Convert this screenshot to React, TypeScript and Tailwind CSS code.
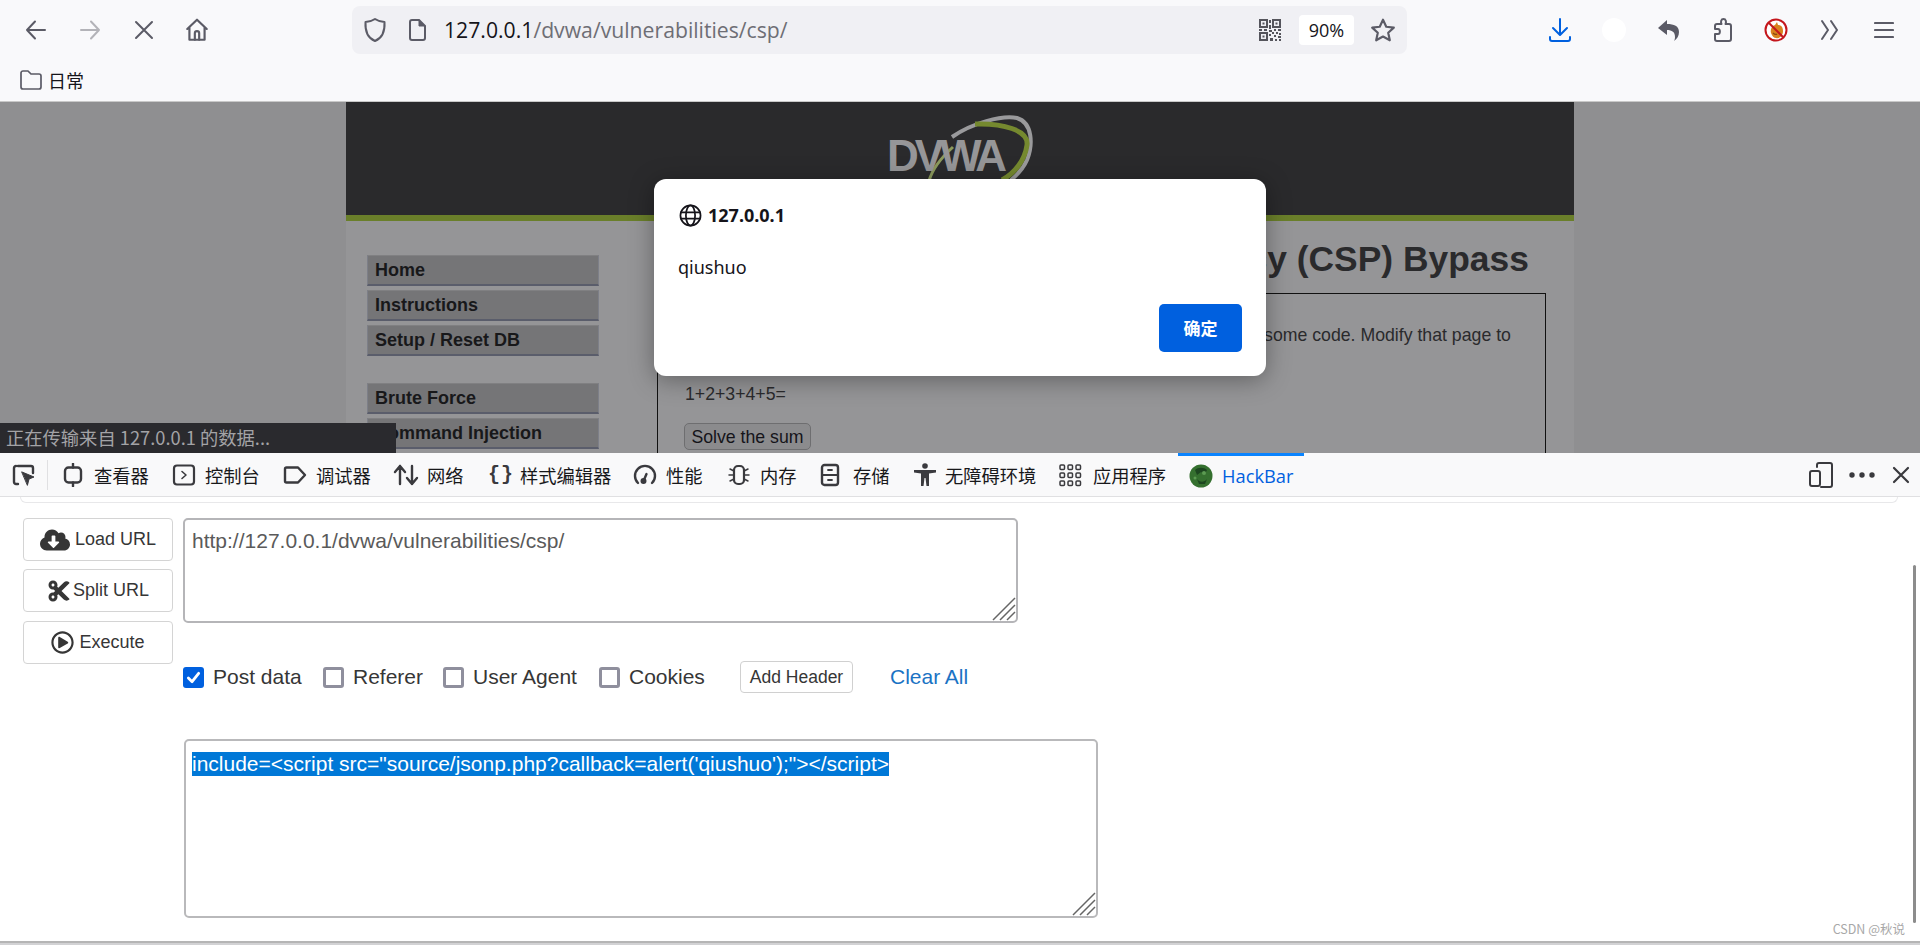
import React from "react";
import { FaCloudDownloadAlt, FaCut, FaRegPlayCircle } from "react-icons/fa";

const Stroke = ({ children, w = 24, h = 24, vb = "0 0 24 24", color = "#5b5b66", sw = 2 }: any) => (
  <svg width={w} height={h} viewBox={vb} fill="none" stroke={color} strokeWidth={sw} strokeLinecap="round" strokeLinejoin="round" className="shrink-0 block">
    {children}
  </svg>
);

const Qr = () => (
  <svg width="22" height="22" viewBox="0 0 22 22" className="shrink-0 block" fill="#55555c">
    <path fillRule="evenodd" d="M0 0h9v9H0zM2 2v5h5V2zM13 0h9v9h-9zM15 2v5h5V2zM0 13h9v9H0zM2 15v5h5v-5z" />
    <rect x="3.5" y="3.5" width="2" height="2" />
    <rect x="16.5" y="3.5" width="2" height="2" />
    <rect x="3.5" y="16.5" width="2" height="2" />
    <path d="M10 1h2v3h-2zM10 6h2v4h-2zM0 10h3v2H0zM5 10h3v2H5zM10 11h3v2h-3zM15 10h2v2h-2zM19 10h3v2h-3zM13 13h2v2h-2zM17 13h2v2h-2zM20 14h2v2h-2zM10 15h2v2h-2zM15 16h2v2h-2zM19 17h3v2h-3zM11 19h3v3h-3zM16 20h2v2h-2zM20 20h2v2h-2z" />
  </svg>
);

const NoScript = () => (
  <svg width="24" height="24" viewBox="0 0 24 24" className="shrink-0 block">
    <circle cx="12" cy="12" r="10.5" fill="#fff" stroke="#c4161c" strokeWidth="2" />
    <path d="M7 15c-1-4 1-7 4-8l2-3 1 3c3 0 5 2 5 6 0 5-4 8-7 7-2 0-4-2-5-5z" fill="#d9821e" />
    <path d="M9 15c1 1 3 2 4 1" stroke="#8a4b10" strokeWidth="1.4" fill="none" />
    <path d="M5 5l14 14" stroke="#c4161c" strokeWidth="2" />
  </svg>
);

const Globe = () => (
  <svg width="23" height="23" viewBox="0 0 24 24" fill="none" stroke="#15141a" strokeWidth="1.8" className="shrink-0 block">
    <circle cx="12" cy="12" r="10.5" />
    <ellipse cx="12" cy="12" rx="4.8" ry="10.5" />
    <path d="M1.5 8.7h21M1.5 15.3h21" />
  </svg>
);

const DvwaLogo = () => (
  <div className="relative w-[146px] h-[99px]">
    <svg width="146" height="99" viewBox="0 0 146 99" className="absolute left-0 top-0 block">
      <path d="M65 22C85 8 115 0 130 3c16 5 16 27 10 42-3 7-10 15-16 20" fill="none" stroke="#9a9a9c" strokeWidth="4" />
      <path d="M88 9c27-1 54 6 52 21-2 15-12 28-25 35" fill="none" stroke="#75892f" strokeWidth="5" />
      <path d="M66 32C55 42 45 55 42 66" fill="none" stroke="#8b9a5c" strokeWidth="3" />
    </svg>
    <span className="absolute left-0 top-[16px] text-[44px] leading-[50px] font-bold tracking-[-4px] text-[#969698] [font-family:'Liberation_Sans',sans-serif]">DVWA</span>
  </div>
);

const TabIcons: Record<string, React.ReactNode> = {
  insp: (
    <Stroke w={24} h={24} color="#3a3a3e" sw={2.4}>
      <path d="M6 3h13a2 2 0 0 1 2 2v5M6 21H4a2 2 0 0 1-2-2V5a2 2 0 0 1 2-2" />
      <path d="M10 9l12 5-5 2-1.500 6z" fill="#3a3a3e" strokeWidth={1} />
    </Stroke>
  ),
  console: (
    <Stroke w={24} h={24} color="#3a3a3e" sw={2.2}>
      <rect x="2" y="2.5" width="20" height="19" rx="3" />
      <path d="M10 8.5l4 3.5-4 3.5" strokeWidth={1.6} />
    </Stroke>
  ),
  debug: (
    <Stroke w={24} h={24} color="#3a3a3e" sw={2.4}>
      <path d="M2 6a1.500 1.500 0 0 1 1.500-1.500H15l7 7.500-7 7.500H3.500A1.500 1.500 0 0 1 2 18z" />
    </Stroke>
  ),
  net: (
    <Stroke w={26} h={24} vb="0 0 26 24" color="#3a3a3e">
      <path d="M7 21V3M2 9l5-6 5 6M19 3v18M14 15l5 6 5-6" strokeWidth={2.4} />
    </Stroke>
  ),
  inspect: (
    <Stroke w={22} h={24} vb="0 0 22 24" color="#3a3a3e" sw={2.400}>
      <rect x="3" y="4.500" width="16" height="15" rx="3.500" />
      <path d="M11 0.800v3.700M11 19.500v3.700" />
    </Stroke>
  ),
  style: <span className="text-[20px] font-bold text-[#3a3a3e] leading-6 tracking-[1px] [font-family:'Liberation_Mono',monospace]">{"{}"}</span>,
  perf: (
    <Stroke w={24} h={24} color="#3a3a3e" sw={2.400}>
      <path d="M5 20a10 10 0 1 1 14 0" />
      <path d="M10.500 18l3-7" />
      <circle cx="10.500" cy="18" r="1.800" fill="#3a3a3e" />
    </Stroke>
  ),
  mem: (
    <Stroke w={24} h={24} color="#3a3a3e" sw={2.200}>
      <rect x="7" y="3" width="10" height="18" rx="4" />
      <path d="M3 6l4 2M2 12h5M3 18l4-2M21 6l-4 2M22 12h-5M21 18l-4-2" strokeWidth={1.5} />
    </Stroke>
  ),
  store: (
    <Stroke w={20} h={24} vb="0 0 20 24" color="#3a3a3e" sw={2.400}>
      <rect x="2" y="2" width="16" height="20" rx="2.500" />
      <path d="M2 12h16M8 7h4M8 17h4" strokeWidth={1.800} />
    </Stroke>
  ),
  a11y: (
    <svg width="24" height="24" viewBox="0 0 24 24" fill="#3a3a3e" className="shrink-0 block">
      <circle cx="12" cy="3" r="2.800" />
      <path d="M1 7h22v2.500l-7 1V23h-2.500l-1-8h-1l-1 8H8V10.500l-7-1z" />
    </svg>
  ),
  app: (
    <svg width="24" height="24" viewBox="0 0 24 24" fill="none" stroke="#3a3a3e" strokeWidth="1.500" className="shrink-0 block">
      <rect x="2" y="2" width="4.500" height="4.500" rx="1" />
      <rect x="10" y="2" width="4.500" height="4.500" rx="1" />
      <rect x="18" y="2" width="4.500" height="4.500" rx="1" />
      <rect x="2" y="10" width="4.500" height="4.500" rx="1" />
      <rect x="10" y="10" width="4.500" height="4.500" rx="1" />
      <rect x="18" y="10" width="4.500" height="4.500" rx="1" />
      <rect x="2" y="18" width="4.500" height="4.500" rx="1" />
      <rect x="10" y="18" width="4.500" height="4.500" rx="1" />
      <rect x="18" y="18" width="4.500" height="4.500" rx="1" />
    </svg>
  ),
  hack: (
    <svg width="24" height="24" viewBox="0 0 24 24" className="shrink-0 block">
      <circle cx="12" cy="12" r="11.500" fill="#35702f" />
      <path d="M6 6c3-3 9-3 12 0l-2 4-4-2-4 3zM8 15c2 3 7 4 10 0l-2 5-6 0z" fill="#1d4620" />
      <circle cx="15" cy="9" r="2" fill="#5c9b52" />
      <circle cx="6" cy="14" r="1.500" fill="#5c9b52" />
    </svg>
  ),
};

const tabs = [
  { k: "inspect", t: "查看器", c: "w-[110px]", i: "w-[32px]" },
  { k: "console", t: "控制台", c: "w-[111px]", i: "w-[33px]" },
  { k: "debug", t: "调试器", c: "w-[110px]", i: "w-[33px]" },
  { k: "net", t: "网络", c: "w-[95px]", i: "w-[34px]" },
  { k: "style", t: "样式编辑器", c: "w-[145px]", i: "w-[32px]" },
  { k: "perf", t: "性能", c: "w-[94px]", i: "w-[33px]" },
  { k: "mem", t: "内存", c: "w-[93px]", i: "w-[33px]" },
  { k: "store", t: "存储", c: "w-[93px]", i: "w-[33px]" },
  { k: "a11y", t: "无障碍环境", c: "w-[145px]", i: "w-[32px]" },
  { k: "app", t: "应用程序", c: "w-[120px]", i: "w-[35px]" },
];

const MenuItem = ({ t }: { t: string }) => (
  <div className="h-[31px] shrink-0 bg-[#757577] border-t border-t-[#808082] border-x border-x-[#7d7f88] border-b-2 border-b-[#5a5d6b] pl-[7px] flex items-center text-[18px] font-bold text-[#18181a]">
    {t}
  </div>
);

const HBtn = ({ icon, t, c = "" }: { icon: React.ReactNode; t: string; c?: string }) => (
  <div className={"h-[43px] border border-[#d4d4d4] rounded-[4px] bg-white flex items-center justify-center gap-[5px] text-[18px] text-[#363636] " + c}>
    {icon}
    <span>{t}</span>
  </div>
);

const Check = ({ t, on, c }: { t: string; on?: boolean; c: string }) => (
  <div className={"flex items-center gap-[9px] " + c}>
    {on ? (
      <span className="w-[21px] h-[21px] rounded-[3px] bg-[#0060df] flex items-center justify-center">
        <svg width="15" height="15" viewBox="0 0 16 16" fill="none" stroke="#fff" strokeWidth="3" strokeLinecap="round" strokeLinejoin="round"><path d="M2.500 8.500l4 4 7-9" /></svg>
      </span>
    ) : (
      <span className="w-[21px] h-[21px] rounded-[3px] border-[3px] border-[#8f8f9d] bg-white" />
    )}
    <span className="text-[21px] leading-[24px] text-[#363636]">{t}</span>
  </div>
);

const Grip = () => (
  <svg width="24" height="24" viewBox="0 0 24 24" className="absolute right-0 bottom-0 block" stroke="#666" strokeWidth="1.500">
    <path d="M23 1L1 23M23 8L8 23M23 15L15 23" />
  </svg>
);

export default function App() {
  return (
    <div className="relative w-[1920px] h-[945px] overflow-hidden bg-white flex flex-col [font-family:'Liberation_Sans',sans-serif]">
      {/* Browser chrome */}
      <div className="h-[102px] shrink-0 bg-[#f9f9fb] border-b border-b-[#c8c8c8] flex flex-col">
        <div className="h-[60px] flex items-center">
          <div className="w-[352px] flex items-center pl-[24px]">
            <Stroke w={24} h={24}><path d="M21 12H3M11 3.500L3 12l8 8.500" sw={1.600} /></Stroke>
            <div className="w-[30px]" />
            <Stroke w={24} h={24} color="#b3b3b8"><path d="M3 12h18M13 3.500l8 8.500-8 8.500" /></Stroke>
            <div className="w-[32px]" />
            <Stroke w={20} h={20} vb="0 0 20 20"><path d="M2 2l16 16M18 2L2 18" /></Stroke>
            <div className="w-[30px]" />
            <Stroke w={26} h={26}>
              <path d="M3 11l9-8.500 9 8.500M5 9.500V21h14V9.500" sw={1.600} />
              <path d="M10 21v-6a2 2 0 0 1 4 0v6" />
            </Stroke>
          </div>
          <div className="w-[1055px] h-[48px] bg-[#f0f0f4] rounded-[8px] flex items-center pl-[11px] pr-[11px]">
            <Stroke w={24} h={26} vb="0 0 24 26">
              <path d="M12 2c3 2 6 3 9.500 3 .5 9-2 16-9.500 19C4.500 21 2 14 2.500 5 6 5 9 4 12 2z" />
            </Stroke>
            <div className="w-[21px]" />
            <Stroke w={19} h={24} vb="0 0 19 24">
              <path d="M2 4a2 2 0 0 1 2-2h7l6 6v12a2 2 0 0 1-2 2H4a2 2 0 0 1-2-2z" />
              <path d="M11 2v6h6" fill="#5b5b66" strokeWidth={1} />
            </Stroke>
            <div className="w-[17px]" />
            <span className="text-[21.200px] text-[#15141a] [font-family:'Open_Sans',sans-serif]">
              127.0.0.1<span className="text-[#6e6e75]">/dvwa/vulnerabilities/csp/</span>
            </span>
            <div className="flex-1" />
            <Qr />
            <div className="w-[18px]" />
            <div className="w-[55px] h-[30px] bg-white rounded-[4px] flex items-center justify-center text-[18px] text-[#15141a] [font-family:'Open_Sans',sans-serif]">90%</div>
            <div className="w-[16px]" />
            <Stroke w={26} h={26}>
              <path d="M12 2.500l3 6.500 7 .8-5.200 4.700 1.500 7L12 18l-6.300 3.500 1.500-7L2 9.800l7-.8z" />
            </Stroke>
          </div>
          <div className="flex-1 flex items-center pl-[142px]">
            <Stroke w={22} h={24} vb="0 0 22 24" color="#0060df">
              <path d="M11 1v15M4 10l7 7 7-7M1 19v2a2 2 0 0 0 2 2h16a2 2 0 0 0 2-2v-2" />
            </Stroke>
            <div className="w-[31px]" />
            <div className="w-[24px] h-[24px] rounded-full bg-white" />
            <div className="w-[31px]" />
            <svg width="22" height="24" viewBox="0 0 22 24" fill="#5b5b66" className="shrink-0 block">
              <path d="M10 2L1 10l9 7v-5c5 0 8 2 8 7 0 2-.5 3-1 4 3-2 5-5 5-9 0-6-5-8-12-8z" />
            </svg>
            <div className="w-[34px]" />
            <Stroke w={20} h={26} vb="0 0 20 26">
              <path d="M6 7h2.500c-1-2-.5-5 2-5s3 3 2 5H16a2 2 0 0 1 2 2v13a2 2 0 0 1-2 2H4a2 2 0 0 1-2-2v-5h3c2.500 0 2.500-5 0-5H2V9a2 2 0 0 1 2-2z" />
            </Stroke>
            <div className="w-[31px]" />
            <NoScript />
            <div className="w-[32px]" />
            <Stroke w={20} h={24} vb="0 0 20 24"><path d="M2 3l6 9-6 9M11 3l6 9-6 9" /></Stroke>
            <div className="w-[34px]" />
            <Stroke w={20} h={20} vb="0 0 20 20" sw={2.200}><path d="M1 3h18M1 10h18M1 17h18" /></Stroke>
          </div>
        </div>
        <div className="flex-1 flex items-center pl-[20px] pb-[2px]">
          <Stroke w={22} h={20} vb="0 0 22 20" sw={1.700}>
            <path d="M1 3a2 2 0 0 1 2-2h5l3 3h8a2 2 0 0 1 2 2v11a2 2 0 0 1-2 2H3a2 2 0 0 1-2-2z" />
          </Stroke>
          <span className="ml-[6px] text-[18px] leading-[24px] text-[#15141a] [font-family:'Noto_Sans_CJK_SC',sans-serif]">日常</span>
        </div>
      </div>

      {/* Dimmed page */}
      <div className="h-[351px] shrink-0 overflow-hidden bg-[#8f8f91] pl-[346px]">
        <div className="w-[1228px] h-[351px] bg-[#959597] flex flex-col">
          <div className="h-[113px] shrink-0 bg-[#2a2a2c] pl-[541px] pt-[13px]">
            <DvwaLogo />
          </div>
          <div className="h-[6px] shrink-0 bg-[#6a7f2a]" />
          <div className="flex flex-1 min-h-0 pl-[21px]">
            <div className="w-[232px] shrink-0 flex flex-col gap-[4px] pt-[34px]">
              <MenuItem t="Home" />
              <MenuItem t="Instructions" />
              <MenuItem t="Setup / Reset DB" />
              <div className="h-[19px] shrink-0" />
              <MenuItem t="Brute Force" />
              <MenuItem t="Command Injection" />
            </div>
            <div className="ml-[58px] w-[889px] flex flex-col">
              <h1 className="h-[72px] shrink-0 pt-[18px] text-[35.400px] leading-[40px] font-bold text-[#2a2a2c] whitespace-nowrap">
                Vulnerability: Content Security Policy (CSP) Bypass
              </h1>
              <div className="flex-1 border border-[#111] border-b-0 pl-[27px] text-[#2a2a2c] text-[17.700px] leading-[26px]">
                <p className="pt-[28px] w-[850px]">The page makes a call to ../..//vulnerabilities/csp/source/jsonp.php to load some code. Modify that page to run your own code.</p>
                <p className="mt-[7px]">1+2+3+4+5=</p>
                <div className="mt-[16px] w-[127px] h-[27px] -ml-[1px] rounded-[5px] bg-[#8b8b8d] border border-[#6e6e70] flex items-center justify-center text-[#15141a]">Solve the sum</div>
              </div>
            </div>
          </div>
        </div>
      </div>

      {/* Devtools tab bar */}
      <div className="h-[44px] shrink-0 bg-[#f9f9fa] border-b border-b-[#e0e0e2] flex items-center relative text-[#18181a] [font-family:'Noto_Sans_CJK_SC',sans-serif]">
        <div className="w-[48px] h-[30px] border-r border-r-[#e0e0e2] pl-[12px] flex items-center">{TabIcons.insp}</div>
        <div className="w-[14px]" />
        {tabs.map((t) => (
          <div key={t.k} className={"flex items-center shrink-0 " + t.c}>
            <div className={"flex items-center shrink-0 " + t.i}>{TabIcons[t.k]}</div>
            <span className="text-[18.300px] leading-[24px] whitespace-nowrap">{t.t}</span>
          </div>
        ))}
        <div className="w-[126px] h-[43px] self-start border-t-[3px] border-t-[#0a84ff] flex items-center pl-[11px]">
          {TabIcons.hack}
          <span className="ml-[9px] text-[18.300px] text-[#0060df] [font-family:'Open_Sans',sans-serif]">HackBar</span>
        </div>
        <div className="flex-1" />
        <Stroke w={24} h={26} vb="0 0 24 26" color="#3a3a3e">
          <path d="M8 5V3a2 2 0 0 1 2-2h11a2 2 0 0 1 2 2v20a2 2 0 0 1-2 2h-9" />
          <rect x="1" y="9" width="10" height="15" rx="2" />
        </Stroke>
        <svg width="26" height="6" viewBox="0 0 26 6" fill="#3a3a3e" className="ml-[16px] block shrink-0">
          <circle cx="3" cy="3" r="2.700" /><circle cx="13" cy="3" r="2.700" /><circle cx="23" cy="3" r="2.700" />
        </svg>
        <div className="w-[17px]" />
        <Stroke w={18} h={18} vb="0 0 18 18" color="#3a3a3e" sw={2.200}><path d="M2 2l14 14M16 2L2 16" /></Stroke>
        <div className="w-[10px]" />
      </div>

      {/* HackBar panel */}
      <div className="flex-1 min-h-0 relative bg-white">
        <div className="ml-[20px] w-[1878px] h-[6px] border border-t-0 border-[#e8e8ea] rounded-b-[6px]" />
        <div className="flex mt-[15px]">
          <div className="ml-[23px] w-[150px] flex flex-col gap-[8px]">
            <HBtn icon={<FaCloudDownloadAlt className="text-[#363636] w-[30px] h-[24px]" />} t="Load URL" />
            <HBtn icon={<FaCut className="text-[#363636] w-[24px] h-[24px] -mr-[3px]" />} t="Split URL" />
            <HBtn c="mt-[1px]" icon={<FaRegPlayCircle className="text-[#363636] w-[23px] h-[23px]" />} t="Execute" />
          </div>
          <div className="ml-[10px] flex flex-col">
            <div className="relative w-[835px] h-[105px] border-2 border-[#b5b5b8] rounded-[5px] pl-[7px] pt-[9px] text-[21px] leading-[24px] text-[#5a5a5a]">
              http://127.0.0.1/dvwa/vulnerabilities/csp/
              <Grip />
            </div>
            <div className="flex items-center mt-[38px] h-[32px]">
              <Check t="Post data" on c="w-[140px]" />
              <Check t="Referer" c="w-[120px]" />
              <Check t="User Agent" c="w-[156px]" />
              <Check t="Cookies" c="w-[141px]" />
              <div className="w-[113px] h-[32px] border border-[#d0d0d0] rounded-[4px] flex items-center justify-center text-[17.500px] text-[#363636]">Add Header</div>
              <span className="ml-[37px] text-[21px] text-[#1a73c4]">Clear All</span>
            </div>
            <div className="relative mt-[46px] ml-[1px] w-[914px] h-[179px] border-2 border-[#b9b9bb] rounded-[5px] pl-[6px] pt-[11px] text-[21px] leading-[24px] text-white">
              <span className="bg-[#0078d7] inline-block h-[24px] whitespace-nowrap">include=&lt;script src="source/jsonp.php?callback=alert('qiushuo');"&gt;&lt;/script&gt;</span>
              <Grip />
            </div>
          </div>
        </div>
        <div className="absolute right-[4px] top-[68px] w-[3px] h-[358px] rounded-full bg-[#8c8c8c]" />
        <span className="absolute right-[15px] bottom-[5px] text-[12.500px] leading-[14px] text-[#a8a8a8] [font-family:'Noto_Sans_CJK_SC',sans-serif]">CSDN @秋说</span>
      </div>
      <div className="h-[4px] shrink-0 bg-[#d2d2d4] border-t-2 border-t-[#b5b5b5]" />

      {/* Status tooltip */}
      <div className="absolute left-0 top-[423px] w-[396px] h-[30px] bg-[#2a2a2e] pl-[6px] flex items-center text-[18.300px] text-[#a3a3a6] [font-family:'Noto_Sans_CJK_SC',sans-serif]">
        正在传输来自 127.0.0.1 的数据...
      </div>

      {/* Alert dialog */}
      <div className="absolute left-[654px] top-[179px] w-[612px] h-[197px] rounded-[12px] bg-white shadow-[0_4px_24px_rgba(0,0,0,0.35)] [font-family:'Noto_Sans',sans-serif]">
        <div className="absolute left-[25px] top-[24px] flex items-center gap-[6px]">
          <Globe />
          <span className="text-[18px] font-bold text-[#15141a] leading-[24px]">127.0.0.1</span>
        </div>
        <span className="absolute left-[24px] top-[76px] text-[18px] leading-[24px] text-[#15141a]">qiushuo</span>
        <div className="absolute left-[505px] top-[125px] w-[83px] h-[48px] rounded-[5px] bg-[#0060df] flex items-center justify-center text-[17px] font-bold text-white [font-family:'Noto_Sans_CJK_SC',sans-serif]">确定</div>
      </div>
    </div>
  );
}
